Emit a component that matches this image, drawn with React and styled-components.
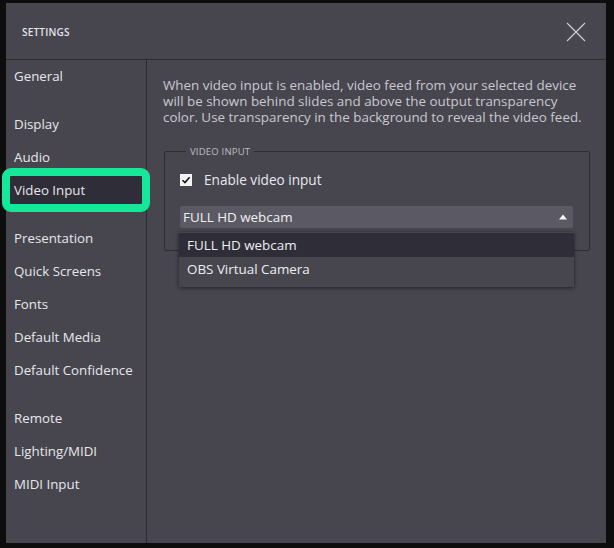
import React from "react";
import styled, { createGlobalStyle } from "styled-components";

const Global = createGlobalStyle`
  html, body { margin: 0; padding: 0; background: #0d0d0e; }
  body { width: 614px; height: 548px; overflow: hidden; font-family: "Open Sans", "Noto Sans", sans-serif; }
  * { box-sizing: border-box; }
`;

const Stage = styled.div`
  width: 614px;
  height: 548px;
  padding: 3px 8px 5px 6px;
  display: flex;
`;

const Dialog = styled.div`
  flex: 1;
  background: #47464f;
  display: flex;
  flex-direction: column;
`;

const Header = styled.div`
  height: 57px;
  flex: none;
  border-bottom: 1px solid #2d2c33;
  display: flex;
  align-items: center;
  justify-content: space-between;
  padding: 2px 20px 0 16px;
`;

const Title = styled.div`
  font-size: 10px;
  font-weight: 600;
  color: #e4e4e8;
  letter-spacing: 0.2px;
`;

const CloseBtn = styled.button`
  background: none;
  border: none;
  padding: 0;
  width: 20px;
  height: 20px;
  display: flex;
  cursor: pointer;
`;

const Body = styled.div`
  flex: 1;
  display: flex;
`;

const Sidebar = styled.nav`
  width: 141px;
  flex: none;
  border-right: 1px solid #2d2c33;
  padding: 2px 4px 0 4px;
  display: flex;
  flex-direction: column;
`;

const NavItem = styled.div`
  height: 28px;
  margin-top: ${(p) => (p.$gap ? 20 : 5)}px;
  padding: 0 4px;
  display: flex;
  align-items: center;
  font-size: 13.3px;
  color: #e6e6ea;
  white-space: nowrap;
  border-radius: 1px;
  background: ${(p) => (p.$active ? "#2e2d38" : "transparent")};
  outline: ${(p) => (p.$active ? "8px solid #15e899" : "none")};
  outline-offset: 0;
  position: relative;
  z-index: 1;
  &:first-child { margin-top: 0; }
`;

const Content = styled.div`
  flex: 1;
  padding: 17px 16px 0 16px;
  display: flex;
  flex-direction: column;
`;

const Description = styled.p`
  margin: 0;
  font-size: 13.4px;
  line-height: 16px;
  color: #c9c8cf;
`;

const Fieldset = styled.fieldset`
  margin: 20px 0 0 1px;
  border: 1px solid #2e2d35;
  border-radius: 2px;
  padding: 12px 16px 22px 15px;
  position: relative;
`;

const Legend = styled.legend`
  font-size: 9.5px;
  color: #bdbcc3;
  padding: 0 4px;
  margin-left: 6px;
  letter-spacing: 0.2px;
`;

const CheckRow = styled.label`
  display: flex;
  align-items: center;
  gap: 12px;
  font-size: 13.6px;
  color: #e8e8ec;
`;

const Box = styled.span`
  width: 12px;
  height: 12px;
  background: #f4f4f4;
  display: flex;
  align-items: center;
  justify-content: center;
`;

const SelectWrap = styled.div`
  position: relative;
  margin-top: 17px;
`;

const Select = styled.div`
  height: 22px;
  background: #5b5a64;
  border-radius: 2px;
  display: flex;
  align-items: center;
  justify-content: space-between;
  padding: 0 6px 0 3px;
  font-size: 13.4px;
  color: #f0f0f2;
`;

const Menu = styled.div`
  position: absolute;
  left: -1px;
  right: -1px;
  top: 26px;
  background: #47464f;
  box-shadow: 0 1px 4px rgba(0, 0, 0, 0.55);
  padding: 1px 0 6px 0;
  z-index: 5;
`;

const MenuItem = styled.div`
  height: 24px;
  display: flex;
  align-items: center;
  padding-left: 8px;
  font-size: 13.4px;
  color: #eeeef0;
  background: ${(p) => (p.$hl ? "#2f2e38" : "transparent")};
`;

const nav = [
  { label: "General" },
  { label: "Display", gap: true },
  { label: "Audio" },
  { label: "Video Input", active: true },
  { label: "Presentation", gap: true },
  { label: "Quick Screens" },
  { label: "Fonts" },
  { label: "Default Media" },
  { label: "Default Confidence" },
  { label: "Remote", gap: true },
  { label: "Lighting/MIDI" },
  { label: "MIDI Input" },
];

export default function App() {
  return (
    <>
      <Global />
      <Stage>
        <Dialog>
          <Header>
            <Title>SETTINGS</Title>
            <CloseBtn aria-label="Close">
              <svg width="20" height="20" viewBox="0 0 20 20">
                <path d="M1 1L19 19M19 1L1 19" stroke="#c9c8cf" strokeWidth="1.3" fill="none" />
              </svg>
            </CloseBtn>
          </Header>
          <Body>
            <Sidebar>
              {nav.map((n) => (
                <NavItem key={n.label} $gap={n.gap} $active={n.active}>
                  {n.label}
                </NavItem>
              ))}
            </Sidebar>
            <Content>
              <Description>
                When video input is enabled, video feed from your selected device will be shown behind slides and above the output transparency color. Use transparency in the background to reveal the video feed.
              </Description>
              <Fieldset>
                <Legend>VIDEO INPUT</Legend>
                <CheckRow>
                  <Box>
                    <svg width="10" height="10" viewBox="0 0 10 10">
                      <path d="M1.5 5.2L4 7.6L8.6 2.2" stroke="#111" strokeWidth="1.5" fill="none" />
                    </svg>
                  </Box>
                  Enable video input
                </CheckRow>
                <SelectWrap>
                  <Select>
                    FULL HD webcam
                    <svg width="8" height="6" viewBox="0 0 8 6">
                      <path d="M0 5.5L4 0.5L8 5.5Z" fill="#f4f4f4" />
                    </svg>
                  </Select>
                  <Menu>
                    <MenuItem $hl>FULL HD webcam</MenuItem>
                    <MenuItem>OBS Virtual Camera</MenuItem>
                  </Menu>
                </SelectWrap>
              </Fieldset>
            </Content>
          </Body>
        </Dialog>
      </Stage>
    </>
  );
}
